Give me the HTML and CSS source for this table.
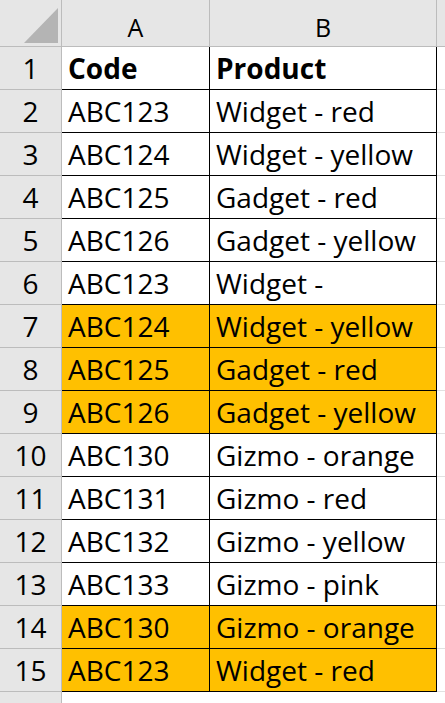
FILE: index.html
```html
<!DOCTYPE html>
<html>
<head>
<meta charset="utf-8">
<link rel="stylesheet" href="styles.css">
</head>
<body>
<div class="sheet">
  <div class="corner"><div class="tri"></div></div>
  <div class="colhead">A</div>
  <div class="colhead">B</div>
  <div class="colhead extra"></div>

  <div class="rowhead">1</div><div class="cell bold">Code</div><div class="cell bold">Product</div><div class="blank"></div>
  <div class="rowhead">2</div><div class="cell">ABC123</div><div class="cell">Widget - red</div><div class="blank"></div>
  <div class="rowhead">3</div><div class="cell">ABC124</div><div class="cell">Widget - yellow</div><div class="blank"></div>
  <div class="rowhead">4</div><div class="cell">ABC125</div><div class="cell">Gadget - red</div><div class="blank"></div>
  <div class="rowhead">5</div><div class="cell">ABC126</div><div class="cell">Gadget - yellow</div><div class="blank"></div>
  <div class="rowhead">6</div><div class="cell">ABC123</div><div class="cell">Widget -</div><div class="blank"></div>
  <div class="rowhead">7</div><div class="cell hl">ABC124</div><div class="cell hl">Widget - yellow</div><div class="blank"></div>
  <div class="rowhead">8</div><div class="cell hl">ABC125</div><div class="cell hl">Gadget - red</div><div class="blank"></div>
  <div class="rowhead">9</div><div class="cell hl">ABC126</div><div class="cell hl">Gadget - yellow</div><div class="blank"></div>
  <div class="rowhead">10</div><div class="cell">ABC130</div><div class="cell">Gizmo - orange</div><div class="blank"></div>
  <div class="rowhead">11</div><div class="cell">ABC131</div><div class="cell">Gizmo - red</div><div class="blank"></div>
  <div class="rowhead">12</div><div class="cell">ABC132</div><div class="cell">Gizmo - yellow</div><div class="blank"></div>
  <div class="rowhead">13</div><div class="cell">ABC133</div><div class="cell">Gizmo - pink</div><div class="blank"></div>
  <div class="rowhead">14</div><div class="cell hl">ABC130</div><div class="cell hl">Gizmo - orange</div><div class="blank"></div>
  <div class="rowhead">15</div><div class="cell hl">ABC123</div><div class="cell hl">Widget - red</div><div class="blank"></div>
  <div class="rowhead"></div><div class="blank"></div><div class="blank"></div><div class="blank"></div>
</div>
</body>
</html>
```
FILE: styles.css
```css
html, body {
  margin: 0;
  padding: 0;
  background: #ffffff;
  overflow: hidden;
}
.sheet {
  display: grid;
  grid-template-columns: 62px 148px 227px 30px;
  grid-template-rows: 47px repeat(15, 43px) 43px;
  font-family: "Open Sans", "Noto Sans", sans-serif;
  color: #000;
}
.sheet > div {
  box-sizing: border-box;
}
.corner {
  background: #e6e6e6;
  border-right: 1px solid #bcbcbc;
  border-bottom: 1px solid #bcbcbc;
  position: relative;
}
.tri {
  position: absolute;
  left: 24px;
  top: 8px;
  width: 0;
  height: 0;
  border-left: 34px solid transparent;
  border-bottom: 35px solid #b4b4b4;
}
.colhead {
  background: #e6e6e6;
  border-right: 1px solid #bcbcbc;
  border-bottom: 1px solid #bcbcbc;
  display: flex;
  align-items: center;
  justify-content: center;
  font-size: 25px;
  padding-top: 8px;
}
.colhead.extra {
  border-right: none;
}
.rowhead {
  background: #e6e6e6;
  border-right: 1px solid #bcbcbc;
  border-bottom: 1px solid #bcbcbc;
  display: flex;
  align-items: flex-end;
  justify-content: center;
  font-size: 28px;
  line-height: 1;
  padding-bottom: 7px;
}
.cell {
  background: #ffffff;
  border-right: 1px solid #000;
  border-bottom: 1px solid #000;
  display: flex;
  align-items: flex-end;
  font-size: 28px;
  line-height: 1;
  padding-left: 6px;
  padding-bottom: 7px;
  white-space: nowrap;
  overflow: hidden;
}
.cell.bold {
  font-weight: 700;
}
.cell.hl {
  background: #ffc000;
}
.blank {
  background: #ffffff;
  border-bottom: 1px solid #e1e1e1;
}
```
